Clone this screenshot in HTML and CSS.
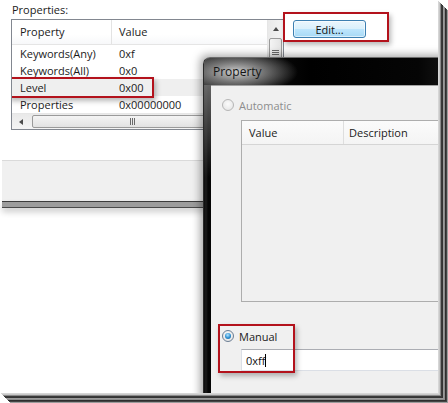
FILE: index.html
```html
<!DOCTYPE html>
<html>
<head>
<meta charset="utf-8">
<title>Properties</title>
<link rel="stylesheet" href="styles.css">
</head>
<body>
<div class="screen">
  <div class="bgwin">
    <div class="label">Properties:</div>
    <div class="toprow">
      <div class="listbox">
        <div class="lv-main">
          <div class="lv-head"><span class="c1 sep">Property</span><span class="c2">Value</span></div>
          <div class="lv-row"><span class="c1">Keywords(Any)</span><span class="c2">0xf</span></div>
          <div class="lv-row"><span class="c1">Keywords(All)</span><span class="c2">0x0</span></div>
          <div class="lv-row sel"><span class="c1">Level</span><span class="c2">0x00</span><div class="mark mark-level"></div></div>
          <div class="lv-row"><span class="c1">Properties</span><span class="c2">0x00000000</span></div>
        </div>
        <div class="vscroll">
          <div class="sb-btn"><span class="tri-up"></span></div>
          <div class="vthumb"><span class="hgrip"><i></i><i></i><i></i></span></div>
        </div>
        <div class="hscroll">
          <div class="sb-btn-h"><span class="tri-left"></span></div>
          <div class="hthumb"><span class="vgrip"><i></i><i></i><i></i></span></div>
        </div>
        <div class="corner"></div>
      </div>
      <div class="editcell">
        <button class="editbtn">Edit...</button>
        <div class="mark mark-edit"></div>
      </div>
    </div>
    <div class="band"></div>
    <div class="band-frame"></div>
  </div>

  <div class="dialog">
    <div class="titlebar"><span class="title">Property</span></div>
    <div class="client">
      <div class="radio-row disabled"><span class="radio"></span><span>Automatic</span></div>
      <div class="inner-list">
        <div class="il-head"><span class="il-c1">Value</span><span class="il-c2">Description</span></div>
      </div>
      <div class="manual-group">
        <div class="radio-row"><span class="radio checked"><span class="dot"></span></span><span>Manual</span></div>
        <div class="textbox"><span>0xff</span><span class="caret"></span></div>
        <div class="mark mark-manual"></div>
      </div>
    </div>
  </div>
</div>
</body>
</html>
```

FILE: styles.css
```css
* { box-sizing: border-box; }
html, body { margin: 0; padding: 0; }
body {
  width: 448px;
  height: 403px;
  overflow: hidden;
  background: #fff;
  font-family: "Open Sans", "Noto Sans", sans-serif;
  font-size: 11px;
  color: #1b1b1b;
}

.screen {
  position: relative;
  width: 438px;
  height: 393px;
  overflow: hidden;
  background: #fff;
  box-shadow:
    1px 1px 0 #d6d6d6,
    2px 2px 0 #c8c8c8,
    3px 3px 0 #8a8a8a,
    4px 4px 0 #3a3a3a,
    5px 5px 0 #343434,
    6px 6px 0 #9a9a9a,
    7px 7px 0 #8c8c8c,
    8px 8px 0 #2e2e2e,
    9px 9px 0 #444,
    10px 10px 0 #9c9c9c;
}

/* background window */
.bgwin { display: flex; flex-direction: column; }
.label { height: 19px; line-height: 19px; padding-left: 12px; }
.toprow { display: flex; align-items: flex-start; padding-left: 11px; }

.listbox {
  width: 273px;
  height: 111px;
  border: 1px solid #828790;
  display: grid;
  grid-template-columns: 1fr 16px;
  grid-template-rows: 1fr 16px;
  background: #fff;
}
.lv-main { overflow: hidden; }
.lv-head {
  display: flex;
  height: 25px;
  align-items: center;
  border-bottom: 1px solid #e5e5e5;
  background: linear-gradient(#fff, #fff 60%, #f7f8fa);
}
.lv-head .c1, .lv-head .c2 { height: 24px; line-height: 24px; }
.sep { border-right: 1px solid #e3e3e3; }
.c1 { width: 100px; padding-left: 8px; flex: none; }
.c2 { padding-left: 7px; }
.lv-row { position: relative; display: flex; height: 17px; line-height: 17px; }
.lv-row.sel { background: #efefef; }

.mark {
  position: absolute;
  border: 2px solid #b3121c;
  box-shadow: 2px 3px 5px rgba(0, 0, 0, 0.28);
  pointer-events: none;
}
.mark-level { left: -4px; top: -2px; width: 146px; height: 21px; }

.vscroll {
  border-left: 1px solid #e6e6e6;
  background: linear-gradient(to right, #e9e9e9, #f4f4f4);
  display: flex;
  flex-direction: column;
}
.sb-btn { height: 17px; display: flex; align-items: center; justify-content: center; }
.tri-up {
  width: 0; height: 0;
  border-left: 3.5px solid transparent;
  border-right: 3.5px solid transparent;
  border-bottom: 4px solid #4b4b4b;
}
.vthumb {
  margin: 1px 1px 0 1px;
  height: 60px;
  border: 1px solid #9a9a9a;
  border-radius: 2px;
  background: linear-gradient(to right, #f4f4f4, #e4e4e4);
  display: flex;
  justify-content: center;
  padding-top: 11px;
}
.hgrip { display: flex; flex-direction: column; gap: 1px; }
.hgrip i { display: block; width: 7px; height: 1px; background: #6a6a6a; }

.hscroll {
  border-top: 1px solid #e6e6e6;
  background: linear-gradient(#e9e9e9, #f4f4f4);
  display: flex;
  align-items: stretch;
}
.sb-btn-h { width: 17px; display: flex; align-items: center; justify-content: center; }
.tri-left {
  width: 0; height: 0;
  border-top: 3.5px solid transparent;
  border-bottom: 3.5px solid transparent;
  border-right: 4px solid #4b4b4b;
}
.hthumb {
  margin: 1px 0 1px 3px;
  width: 200px;
  border: 1px solid #9a9a9a;
  border-radius: 2px;
  background: linear-gradient(#f4f4f4, #e2e2e2);
  display: flex;
  align-items: center;
  justify-content: center;
}
.vgrip { display: flex; gap: 1px; }
.vgrip i { display: block; width: 1px; height: 7px; background: #6a6a6a; }
.corner { background: #f0f0f0; }

.editcell { position: relative; margin-left: 9px; margin-top: 1px; }
.editbtn {
  display: block;
  width: 73px;
  height: 18px;
  padding: 0;
  border: 1px solid #3c7fb1;
  border-radius: 3px;
  font-family: inherit;
  font-size: 11px;
  color: #111;
  line-height: 15px;
  background: linear-gradient(#eaf6fd, #d9f0fc 50%, #bee6fd 50%, #a7d9f5);
  box-shadow: inset 0 0 0 1px rgba(255, 255, 255, 0.6);
}
.mark-edit { left: -10px; top: -8px; width: 106px; height: 30px; }

.band {
  margin-top: 30px;
  margin-left: 2px;
  width: 300px;
  height: 41px;
  border-top: 1px solid #dadada;
  background: #f0f0f0;
}
.band-frame {
  margin-left: 2px;
  width: 300px;
  height: 7px;
  background: linear-gradient(#3c3c3c 0 1px, #9d9d9d 1px 6px, #4a4a4a 6px 7px);
  box-shadow: 0 4px 6px rgba(0, 0, 0, 0.2);
}

/* dialog */
.dialog {
  position: absolute;
  left: 203px;
  top: 57px;
  width: 270px;
  height: 360px;
  border: 1px solid #2a2a2a;
  border-top-color: #6c6c6c;
  border-radius: 7px 0 0 0;
  padding-left: 7px;
  display: flex;
  flex-direction: column;
  background:
    linear-gradient(to bottom, rgba(140,140,140,0.9) 0, rgba(90,90,90,0.6) 70px, rgba(0,0,0,0) 120px) left top / 7px 100% no-repeat,
    linear-gradient(to right, #0c0c0c, #1c1c1c 2px, #050505 4px, #000);
  box-shadow: -3px -2px 8px rgba(0, 0, 0, 0.35);
}
.titlebar {
  height: 27px;
  margin-left: -7px;
  padding-left: 9px;
  display: flex;
  align-items: center;
  border-top-left-radius: 6px;
  background:
    radial-gradient(ellipse 62px 22px at 32px 14px, rgba(215,215,215,0.95) 0, rgba(170,170,170,0.65) 45%, rgba(0,0,0,0) 100%),
    linear-gradient(to right, #1a1a1a, #000 40%, #050505 80%, #222);
}
.title { font-size: 12px; color: #141414; }
.client {
  flex: 1;
  background: #f0f0f0;
  border-top: 1px solid #a3a3a3;
  padding-left: 11px;
  display: flex;
  flex-direction: column;
}
.radio-row { display: flex; align-items: center; gap: 5px; height: 14px; }
.radio-row.disabled { margin-top: 12px; color: #8d8d8d; }
.radio {
  width: 12px;
  height: 12px;
  border-radius: 50%;
  border: 1px solid #b6b6b6;
  background: radial-gradient(circle at 50% 40%, #fbfbfb, #e2e2e2);
  display: flex;
  align-items: center;
  justify-content: center;
  flex: none;
}
.radio.checked {
  border-color: #6b7e94;
  background: radial-gradient(circle at 50% 40%, #fff, #dcdcdc);
}
.dot {
  width: 6px;
  height: 6px;
  border-radius: 50%;
  background: radial-gradient(circle at 45% 35%, #b8e6ff, #2b8ed0 55%, #16558a);
}
.inner-list {
  margin-top: 8px;
  margin-left: 19px;
  width: 300px;
  height: 182px;
  border: 1px solid #adadad;
  background: #f0f0f0;
}
.il-head {
  display: flex;
  height: 24px;
  line-height: 23px;
  border-bottom: 1px solid #d5d5d5;
  background: linear-gradient(#fbfbfb, #f4f4f4);
}
.il-c1 { width: 102px; padding-left: 7px; border-right: 1px solid #dedede; }
.il-c2 { padding-left: 5px; }

.manual-group { position: relative; margin-top: 27px; }
.textbox {
  margin-top: 6px;
  margin-left: 19px;
  width: 300px;
  height: 22px;
  border: 1px solid #dbdfe6;
  border-top-color: #abadb3;
  background: #fff;
  display: flex;
  align-items: center;
  padding-left: 4px;
  color: #111;
}
.caret { display: block; width: 1px; height: 13px; background: #000; margin-left: 0; }
.mark-manual { left: -4px; top: -5px; width: 77px; height: 49px; }
```
